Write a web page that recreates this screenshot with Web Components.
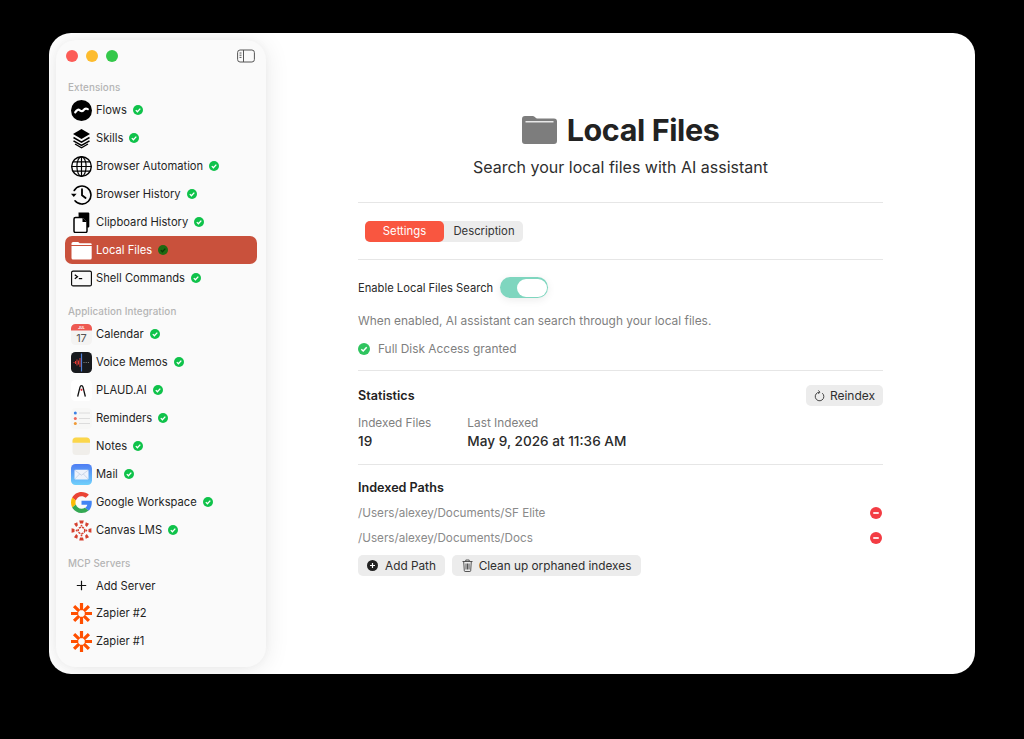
<!DOCTYPE html>
<html>
<head>
<meta charset="utf-8">
<title>Local Files</title>
<style>
  html, body { margin: 0; height: 100%; background: #000; }
  body { font-family: Inter, "Liberation Sans", sans-serif; overflow: hidden; }
</style>
</head>
<body>

<template id="icons">
  <svg data-i="flows" viewBox="0 0 21 21"><circle cx="10.5" cy="10.5" r="10.5" fill="#000"/><path d="M4.200 12.400c1.600-2.600 3-3.400 4.600-2.100s3 1.200 4-.4 2-1.900 4-.8" fill="none" stroke="#fff" stroke-width="2.200" stroke-linecap="round"/></svg>
  <svg data-i="skills" viewBox="0 0 21 21"><path d="M10.500 1 19 6l-8.500 5L2 6z" fill="#000"/><path d="M2.500 9.500l8 4.700 8-4.700M2.500 12.800l8 4.700 8-4.700" fill="none" stroke="#000" stroke-width="1.500"/><path d="M4 16l6.500 3.800L17 16" fill="none" stroke="#000" stroke-width="1.300"/></svg>
  <svg data-i="globe" viewBox="0 0 21 21" fill="none" stroke="#000" stroke-width="1.200"><circle cx="10.500" cy="10.500" r="9.800" stroke-width="1.400"/><ellipse cx="10.500" cy="10.500" rx="4.600" ry="9.800"/><path d="M10.500.7v19.600M.7 10.500h19.600M2 5.800h17M2 15.200h17"/></svg>
  <svg data-i="history" viewBox="0 0 21 21" fill="none" stroke="#000" stroke-width="1.600"><path d="M3.200 6.500A9 9 0 1 1 4 16.800" stroke-linecap="round"/><path d="M0 9.800h5.600L2.800 13z" fill="#000" stroke="none"/><path d="M11 5.200v6l3.600 2.800" stroke-width="1.800" stroke-linecap="round" stroke-linejoin="round"/></svg>
  <svg data-i="clipboard" viewBox="0 0 21 21"><path d="M7.500.500h9.800a1 1 0 0 1 1 1v13a1 1 0 0 1-1 1H8z" fill="#000"/><path d="M6 5.500h6.500l3.500 3.600v10a1.300 1.300 0 0 1-1.300 1.300H4.300A1.300 1.300 0 0 1 3 19.100V7a1.500 1.500 0 0 1 1.500-1.500z" fill="#fff" stroke="#000" stroke-width="1.500"/><path d="M11.500 5.500v4.500H16z" fill="#000"/></svg>
  <svg data-i="folderw" viewBox="0 0 21 21"><path d="M.5 5V3.600A1.600 1.600 0 0 1 2.100 2h4.700c.8 0 1.200.7 1.900 1.200h10.600A1.300 1.300 0 0 1 20.700 4.500V5z" fill="#fff"/><path d="M.5 6h20.200v12a1.500 1.500 0 0 1-1.500 1.500H2A1.500 1.500 0 0 1 .5 18z" fill="#fff"/></svg>
  <svg data-i="terminal" viewBox="0 0 21 21" fill="none" stroke="#000"><rect x=".6" y="3.100" width="19.800" height="14.800" rx="1.500" stroke-width="1.100"/><path d="M3.800 6.800l2.700 2-2.700 2" stroke-width="1.200"/><path d="M7.800 10.600h3.400" stroke-width="1.200"/></svg>
  <svg data-i="calendar" viewBox="0 0 21 21"><rect width="21" height="21" rx="4.500" fill="#f4f3f2"/><path d="M0 6.500V4.500A4.500 4.500 0 0 1 4.500 0h12A4.500 4.500 0 0 1 21 4.500V6.500z" fill="#ee5a52"/><text x="10.500" y="4.500" font-size="3.400" font-family="Inter" font-weight="700" text-anchor="middle" fill="#fff">JUL</text><text x="10.500" y="17.800" font-size="11" font-family="Inter" text-anchor="middle" fill="#555">17</text></svg>
  <svg data-i="voice" viewBox="0 0 21 21"><rect width="21" height="21" rx="4.500" fill="#17191d"/><path d="M2.500 10.500h1M4.500 9v3M6 7.500v6M7.500 8.500v4M9 6v9" stroke="#e23b35" stroke-width="1" fill="none"/><path d="M10.500 1.500v18" stroke="#4f7fd6" stroke-width="1.200"/><path d="M12.500 10.500h6" stroke="#aaa" stroke-width=".8" stroke-dasharray="1 1.200"/></svg>
  <svg data-i="plaud" viewBox="0 0 21 21"><rect width="21" height="21" rx="4.500" fill="#fff"/><path d="M6.800 16 9 7.200C9.600 5 11.400 5 12 7.200L14.200 16" fill="none" stroke="#111" stroke-width="1.300" stroke-linecap="round"/><circle cx="10.500" cy="9.800" r="1.100" fill="#d6333a"/></svg>
  <svg data-i="reminders" viewBox="0 0 21 21"><rect width="21" height="21" rx="4.500" fill="#f7f7f6"/><circle cx="4.300" cy="5" r="1.500" fill="#3b82e6"/><circle cx="4.300" cy="10.500" r="1.500" fill="#ec6a5e"/><circle cx="4.300" cy="15.500" r="1.500" fill="#f09a37"/><path d="M8 5h11M8 10.500h11M8 15.500h11" stroke="#dcdcdc" stroke-width="1"/></svg>
  <svg data-i="notes" viewBox="0 0 21 21"><rect x="1.500" y="1.500" width="17.500" height="17.500" rx="3.500" fill="#f0eeea"/><path d="M1.500 6.800V5A3.500 3.500 0 0 1 5 1.500h10.500A3.500 3.500 0 0 1 19 5v1.800z" fill="#fbd64a"/></svg>
  <svg data-i="mail" viewBox="0 0 21 21"><defs><linearGradient id="mg" x1="0" y1="0" x2="0" y2="1"><stop offset="0" stop-color="#4f7df3"/><stop offset="1" stop-color="#6fd0fb"/></linearGradient></defs><rect width="21" height="21" rx="4.500" fill="url(#mg)"/><rect x="3.500" y="5.800" width="14" height="9.600" rx="1" fill="#eef3fb"/><path d="M3.800 6.200l6.700 5 6.700-5M3.800 15l4.800-5M17.200 15l-4.800-5" fill="none" stroke="#b3c3dc" stroke-width=".6"/></svg>
  <svg data-i="google" viewBox="0 0 48 48"><path fill="#EA4335" d="M24 9.500c3.900 0 7.100 1.300 9.700 3.800l7.200-7.200C36.500 2 30.800 0 24 0 14.600 0 6.500 5.400 2.600 13.200l8.400 6.500C13 13.700 18 9.500 24 9.500z"/><path fill="#4285F4" d="M47.500 24.500c0-1.600-.1-3.100-.4-4.500H24v9h13.200c-.6 3-2.300 5.600-4.900 7.300l8.100 6.300c4.700-4.400 7.100-10.800 7.100-18.100z"/><path fill="#FBBC05" d="M11 28.700c-.5-1.400-.8-3-.8-4.700s.3-3.200.8-4.700l-8.400-6.500C.9 16.100 0 19.900 0 24s.9 7.900 2.600 11.200z"/><path fill="#34A853" d="M24 48c6.500 0 11.900-2.100 15.900-5.800l-8.100-6.300c-2.200 1.500-5 2.400-7.800 2.400-6 0-11-4.100-12.900-9.600l-8.400 6.500C6.500 42.600 14.600 48 24 48z"/></svg>
  <svg data-i="canvas" viewBox="0 0 21 21" fill="#d5402f"><circle cx="10.500" cy="10.500" r="3.300" fill="none" stroke="#d5402f" stroke-width="1.500" stroke-dasharray="2.200 .9"/><path d="M8.200 .6h4.600L12 3.500H9zM8.200 20.400h4.600L12 17.500H9zM.6 8.200v4.600L3.500 12V9zM20.400 8.200v4.600L17.500 12V9zM3 3.700 6.200 2.300l.7 2.900-1.700 1.700zM18 3.700l-3.200-1.400-.7 2.900 1.700 1.700zM3 17.300l3.200 1.400.7-2.900-1.700-1.700zM18 17.300l-3.200 1.400-.7-2.900 1.700-1.700z"/><circle cx="10.500" cy="5.600" r=".9"/><circle cx="10.500" cy="15.400" r=".9"/><circle cx="5.600" cy="10.500" r=".9"/><circle cx="15.400" cy="10.500" r=".9"/></svg>
  <svg data-i="plus" viewBox="0 0 21 21"><path d="M10.500 5.800v9.400M5.800 10.500h9.400" stroke="#111" stroke-width="1.200" fill="none"/></svg>
  <svg data-i="zapier" viewBox="0 0 21 21"><g stroke="#ff4f00" stroke-width="3.200"><path d="M10.500 0v7.300M10.500 13.700V21M0 10.500h7.300M13.700 10.500H21M3.100 3.100l5.100 5.100M12.800 12.800l5.100 5.100M17.900 3.100l-5.100 5.100M8.200 12.800l-5.100 5.100"/></g></svg>
</template>

<template id="t-window">
  <style>
    :host { display: flex; width: 926px; height: 641px; margin: 33px 0 0 49px; background: #fff; border-radius: 22px; overflow: hidden; }
    .main { flex: 1; }
  </style>
  <slot name="side"></slot>
  <div class="main"><slot></slot></div>
</template>

<template id="t-sidebar">
  <style>
    :host { display: block; flex: none; width: 210px; height: 627px; margin: 7px 1px 7px 7px; position: relative; background: #fafafa; border-radius: 20px; box-shadow: 0 2px 26px rgba(0,0,0,.09), 0 0 8px rgba(0,0,0,.035); }
    .lights { display: flex; align-items: center; height: 32px; margin-bottom: 9px; padding: 0 11px 0 10px; }
    .dot { width: 12px; height: 12px; border-radius: 50%; margin-right: 8px; }
    .toggle { margin-left: auto; }
  </style>
  <div class="lights">
    <div class="dot" style="background:#fc5c57"></div>
    <div class="dot" style="background:#fdbc2e"></div>
    <div class="dot" style="background:#34c84a"></div>
    <svg class="toggle" width="18" height="14" viewBox="0 0 18 14" fill="none" stroke="#555" stroke-width="1"><rect x=".6" y="1" width="16.800" height="12" rx="2.500"/><path d="M6.500 1v12M2.500 4h2M2.500 6.200h2M2.500 8.400h2" /></svg>
  </div>
  <slot></slot>
</template>

<template id="t-section">
  <style>
    :host { display: block; }
    .h { font-size: 9.800px; font-weight: 500; color: #b4b4b4; padding-left: 12px; height: 14px; line-height: 14px; margin-bottom: 1px; letter-spacing: .1px; }
  </style>
  <div class="h"></div>
  <slot></slot>
</template>

<template id="t-item">
  <style>
    :host { display: flex; align-items: center; height: 28px; margin: 0 9px 0 9px; padding-left: 6px; border-radius: 7px; box-sizing: border-box; font-size: 11.200px; color: #1f1f1f; }
    :host([active]) { background: #c9513c; color: #fff; }
    .ic { width: 21px; height: 21px; flex: none; margin-right: 4px; }
    .ic svg { display: block; width: 21px; height: 21px; }
    .ok { margin-left: 6px; flex: none; display: block; }
    :host([active]) .ok .bg { fill: #1f6a12; }
    :host([active]) .ok .ck { stroke: #0b3a07; }
  </style>
  <div class="ic"></div>
  <span><slot></slot></span>
  <svg class="ok" width="10" height="10" viewBox="0 0 10 10"><circle class="bg" cx="5" cy="5" r="5" fill="#0fc24a"/><path class="ck" d="M2.800 5.100 4.400 6.700 7.300 3.600" fill="none" stroke="#fff" stroke-width="1.300"/></svg>
</template>

<template id="t-page">
  <style>
    :host { display: block; width: 525px; margin-left: 91px; color: #2a2a2a; font-size: 11.200px; }
    .head { height: 170px; padding-top: 79px; box-sizing: border-box; border-bottom: 1px solid #e6e6e6; text-align: center; }
    .title { display: flex; justify-content: center; align-items: center; gap: 10px; height: 34px; font-size: 30.500px; font-weight: 700; color: #222; letter-spacing: -.4px; }
    .sub { margin-top: 10px; height: 22px; line-height: 22px; font-size: 16px; color: #2e2e2e; }
    .tabs { height: 57px; border-bottom: 1px solid #e6e6e6; display: flex; align-items: center; padding-left: 7px; box-sizing: border-box; }
    .tabbar { display: flex; height: 21px; background: #ececec; border-radius: 5px; }
    .tab { display: flex; align-items: center; justify-content: center; border-radius: 5px; font-size: 11.300px; }
    .tab.on { width: 79px; background: #f95640; color: #fff; }
    .tab.off { width: 79px; color: #333; padding-left: 1px; box-sizing: border-box; }
    .enable { height: 111px; border-bottom: 1px solid #e6e6e6; box-sizing: border-box; padding-top: 17px; }
    .row { display: flex; align-items: center; }
    .switch { position: relative; width: 48px; height: 21px; margin-left: 7px; background: #7fd6bf; border-radius: 11px; box-shadow: 0 2px 8px rgba(0,0,0,.08); }
    .knob { position: absolute; right: 1.500px; top: 1.500px; width: 30px; height: 18px; border-radius: 9px; background: #fff; }
    .muted { color: #7f7f7f; font-size: 11.900px; }
    .desc { margin-top: 14px; height: 17px; line-height: 17px; }
    .granted { margin-top: 11px; height: 17px; gap: 8px; }
    .stats { height: 94px; border-bottom: 1px solid #e6e6e6; box-sizing: border-box; padding-top: 14px; position: relative; }
    .sh { display: flex; align-items: center; justify-content: space-between; height: 21px; font-weight: 600; color: #222; font-size: 12.600px; }
    .cols { display: flex; gap: 36px; margin-top: 8px; }
    .cols .muted { line-height: 18px; font-size: 11.800px; }
    .val { font-size: 13.600px; font-weight: 500; color: #2a2a2a; line-height: 18px; }
    button { display: inline-flex; align-items: center; justify-content: center; gap: 5px; height: 21px; border: 0; padding: 0; border-radius: 5px; background: #ececec; color: #2f2f2f; font: inherit; font-size: 11.800px; }
    .paths { padding-top: 13px; }
    .paths .sh { height: 18px; margin-bottom: 4px; }
    .p { display: flex; align-items: center; justify-content: space-between; height: 25px; color: #8a8a8a; padding-right: 1px; font-size: 11.700px; }
    .actions { display: flex; gap: 7px; margin-top: 5px; }
  </style>
  <div class="head">
    <div class="title">
      <svg width="35" height="29" viewBox="0 0 35 29"><path d="M0 4a3 3 0 0 1 3-3h8c1.800 0 2.500 2.500 4 2.500h17a3 3 0 0 1 3 3V26a3 3 0 0 1-3 3H3a3 3 0 0 1-3-3z" fill="#7d7d7d"/><rect x="3.500" y="6" width="28" height="1.500" fill="#e8e8e8"/></svg>
      <span>Local Files</span>
    </div>
    <div class="sub">Search your local files with AI assistant</div>
  </div>
  <div class="tabs">
    <div class="tabbar">
      <div class="tab on">Settings</div>
      <div class="tab off">Description</div>
    </div>
  </div>
  <div class="enable">
    <div class="row">
      <span>Enable Local Files Search</span>
      <div class="switch"><div class="knob"></div></div>
    </div>
    <div class="desc muted">When enabled, AI assistant can search through your local files.</div>
    <div class="row granted muted">
      <svg width="12" height="12" viewBox="0 0 12 12"><circle cx="6" cy="6" r="6" fill="#2fc45f"/><path d="M3.300 6.200 5.200 8 8.700 4.300" fill="none" stroke="#fff" stroke-width="1.500"/></svg>
      <span>Full Disk Access granted</span>
    </div>
  </div>
  <div class="stats">
    <div class="sh">
      <span>Statistics</span>
      <button style="width:77px;font-weight:400;font-size:12px;">
        <svg width="11" height="12" viewBox="0 0 11 12" fill="none" stroke="#444" stroke-width="1"><path d="M8.300 3.200A4.300 4.300 0 1 1 5.500 2.200"/><path d="M4.300.5 6 2.200 4.300 3.900"/></svg>
        Reindex
      </button>
    </div>
    <div class="cols">
      <div><div class="muted">Indexed Files</div><div class="val">19</div></div>
      <div><div class="muted">Last Indexed</div><div class="val">May 9, 2026 at 11:36 AM</div></div>
    </div>
  </div>
  <div class="paths">
    <div class="sh">Indexed Paths</div>
    <div class="p"><span>/Users/alexey/Documents/SF Elite</span><path-remove></path-remove></div>
    <div class="p"><span>/Users/alexey/Documents/Docs</span><path-remove></path-remove></div>
    <div class="actions">
      <button style="width:87px;gap:7px;">
        <svg width="11" height="11" viewBox="0 0 11 11"><circle cx="5.500" cy="5.500" r="5.500" fill="#222"/><path d="M5.500 3v5M3 5.500h5" stroke="#fff" stroke-width="1.200"/></svg>
        Add Path
      </button>
      <button style="width:189px;gap:6px;">
        <svg width="11" height="13" viewBox="0 0 11 13" fill="none" stroke="#444" stroke-width=".9"><path d="M.5 2.500h10M3.800 2.500V1h3.400v1.500M1.700 2.500l.6 9.200c0 .5.400.8.800.8h4.800c.4 0 .8-.3.8-.8l.6-9.200M4 4.500v6M5.500 4.500v6M7 4.500v6"/></svg>
        Clean up orphaned indexes
      </button>
    </div>
  </div>
</template>

<template id="t-remove">
  <style>
    :host { display: block; width: 12px; height: 12px; border-radius: 50%; background: #f33c43; position: relative; }
    i { position: absolute; left: 3px; right: 3px; top: 5px; height: 2px; background: #fff; opacity: .85; border-radius: 1px; }
  </style>
  <i></i>
</template>

<app-window>
  <app-sidebar slot="side">
    <nav-section title="Extensions">
      <nav-item icon="flows">Flows</nav-item>
      <nav-item icon="skills">Skills</nav-item>
      <nav-item icon="globe">Browser Automation</nav-item>
      <nav-item icon="history">Browser History</nav-item>
      <nav-item icon="clipboard">Clipboard History</nav-item>
      <nav-item icon="folderw" active>Local Files</nav-item>
      <nav-item icon="terminal">Shell Commands</nav-item>
    </nav-section>
    <nav-section title="Application Integration" style="margin-top:13px">
      <nav-item icon="calendar">Calendar</nav-item>
      <nav-item icon="voice">Voice Memos</nav-item>
      <nav-item icon="plaud">PLAUD.AI</nav-item>
      <nav-item icon="reminders">Reminders</nav-item>
      <nav-item icon="notes">Notes</nav-item>
      <nav-item icon="mail">Mail</nav-item>
      <nav-item icon="google">Google Workspace</nav-item>
      <nav-item icon="canvas">Canvas LMS</nav-item>
    </nav-section>
    <nav-section title="MCP Servers" style="margin-top:13px">
      <nav-item icon="plus" plain style="height:27px">Add Server</nav-item>
      <nav-item icon="zapier" plain>Zapier #2</nav-item>
      <nav-item icon="zapier" plain>Zapier #1</nav-item>
    </nav-section>
  </app-sidebar>
  <local-files></local-files>
</app-window>

<script>
function shadow(el, id) {
  el.attachShadow({ mode: 'open' });
  el.shadowRoot.appendChild(document.getElementById(id).content.cloneNode(true));
}

class AppWindow extends HTMLElement {
  constructor() { super(); shadow(this, 't-window'); }
}
class AppSidebar extends HTMLElement {
  constructor() { super(); shadow(this, 't-sidebar'); }
}
class NavSection extends HTMLElement {
  constructor() { super(); shadow(this, 't-section'); }
  connectedCallback() {
    this.shadowRoot.querySelector('.h').textContent = this.getAttribute('title');
    this.removeAttribute('title');
  }
}
class NavItem extends HTMLElement {
  constructor() { super(); shadow(this, 't-item'); }
  connectedCallback() {
    const src = document.getElementById('icons').content.querySelector('[data-i="' + this.getAttribute('icon') + '"]');
    this.shadowRoot.querySelector('.ic').appendChild(src.cloneNode(true));
    if (this.hasAttribute('plain')) this.shadowRoot.querySelector('.ok').remove();
  }
}
class LocalFiles extends HTMLElement {
  constructor() { super(); shadow(this, 't-page'); }
}
class PathRemove extends HTMLElement {
  constructor() { super(); shadow(this, 't-remove'); }
}

customElements.define('app-window', AppWindow);
customElements.define('app-sidebar', AppSidebar);
customElements.define('nav-section', NavSection);
customElements.define('nav-item', NavItem);
customElements.define('local-files', LocalFiles);
customElements.define('path-remove', PathRemove);
</script>
</body>
</html>
